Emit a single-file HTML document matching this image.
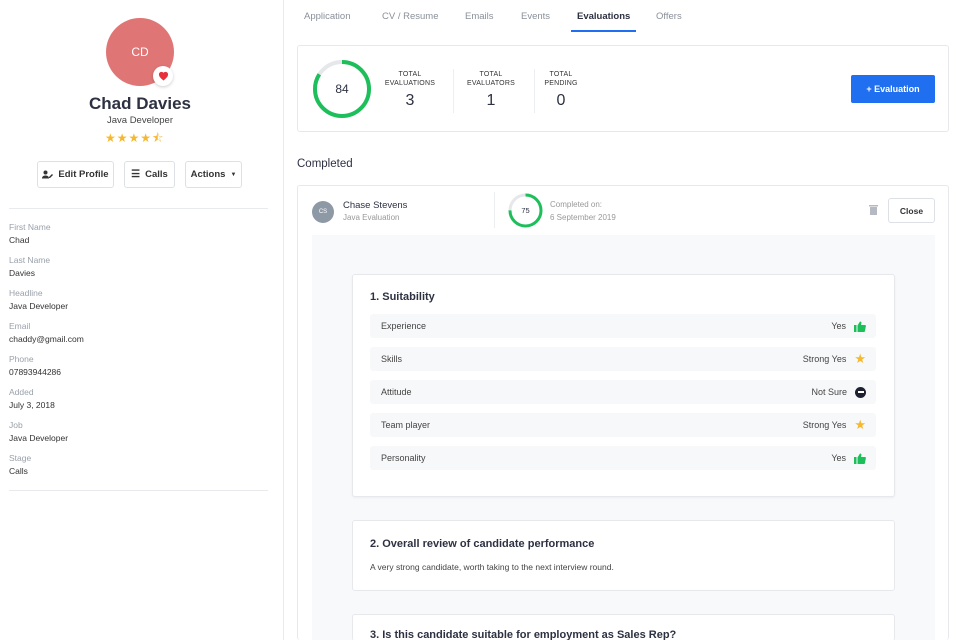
<!DOCTYPE html>
<html style="height:640px;overflow:hidden"><head><meta charset="utf-8"><style>
*{box-sizing:border-box;margin:0;padding:0}
body{width:960px;height:640px;overflow:hidden;background:#fff;font-family:"Liberation Sans",sans-serif;color:#2d3142;position:relative}
.a{position:absolute}
.side{left:0;top:0;width:284px;height:640px;border-right:1px solid #e8eaee}
.btn{position:absolute;height:27px;border:1px solid #dde0e5;border-radius:3px;font-size:9.5px;font-weight:bold;color:#333;display:flex;align-items:center;justify-content:center;gap:5px;background:#fff}
.lbl{position:absolute;left:9px;font-size:8.5px;color:#9aa0ab}
.val{position:absolute;left:9px;font-size:8.5px;color:#333}
.tab{position:absolute;top:11px;font-size:9.5px;color:#8a909a}
.card{position:absolute;background:#fff;border:1px solid #e6e8ec;border-radius:3px}
.sl{position:absolute;font-size:7px;color:#333;text-align:center;line-height:9px;letter-spacing:.2px}
.sn{position:absolute;font-size:16px;color:#2d3142;text-align:center}
.row{position:absolute;left:17px;width:506px;height:24px;background:#f7f8fa;border-radius:3px;font-size:9px;color:#444;display:flex;align-items:center;padding:0 10px 0 11px}
.row .r{margin-left:auto;display:flex;align-items:center;gap:8px}
</style></head><body>
<div class="a side">
  <div class="a" style="left:106px;top:18px;width:68px;height:68px;border-radius:50%;background:#e07575;color:#fff;font-size:12px;display:flex;align-items:center;justify-content:center">CD</div>
  <div class="a" style="left:153px;top:66px;width:20px;height:20px;border-radius:50%;background:#fff;box-shadow:0 1px 3px rgba(0,0,0,.2);display:flex;align-items:center;justify-content:center">
    <svg width="11" height="10" viewBox="0 0 24 22"><path d="M12 21l-1.5-1.3C5 15 2 12 2 7.5 2 4.4 4.4 2 7.5 2c1.7 0 3.4.8 4.5 2.1C13.1 2.8 14.8 2 16.5 2 19.6 2 22 4.4 22 7.5c0 4.5-3 7.5-8.5 12.2z" fill="#e8303a"/></svg>
  </div>
  <div class="a" style="left:0;width:280px;top:94px;text-align:center;font-size:17px;font-weight:bold;color:#2d3142">Chad Davies</div>
  <div class="a" style="left:0;width:280px;top:115px;text-align:center;font-size:9.5px;color:#444">Java Developer</div>
  <div class="a" style="left:105px;top:129px;font-size:12px;color:#f5b82e;letter-spacing:1px">★★★★⯪</div>
  <div class="btn" style="left:37px;top:161px;width:77px"><svg width="11" height="9" viewBox="0 0 22 18"><circle cx="7" cy="5" r="4" fill="#333"/><path d="M0 17c0-4 3-6 7-6s7 2 7 6z" fill="#333"/><path d="M14 14l6-6 2 2-6 6h-2z" fill="#333"/></svg>Edit Profile</div>
  <div class="btn" style="left:124px;top:161px;width:51px"><span style="font-size:10px">☰</span>Calls</div>
  <div class="btn" style="left:185px;top:161px;width:57px">Actions <span style="font-size:6px">▼</span></div>
  <div class="a" style="left:9px;top:208px;width:259px;height:1px;background:#e8eaee"></div>
  <div class="lbl" style="top:222px">First Name</div><div class="val" style="top:235px">Chad</div>
  <div class="lbl" style="top:255px">Last Name</div><div class="val" style="top:268px">Davies</div>
  <div class="lbl" style="top:288px">Headline</div><div class="val" style="top:301px">Java Developer</div>
  <div class="lbl" style="top:321px">Email</div><div class="val" style="top:334px">chaddy@gmail.com</div>
  <div class="lbl" style="top:354px">Phone</div><div class="val" style="top:367px">07893944286</div>
  <div class="lbl" style="top:387px">Added</div><div class="val" style="top:400px">July 3, 2018</div>
  <div class="lbl" style="top:420px">Job</div><div class="val" style="top:433px">Java Developer</div>
  <div class="lbl" style="top:453px">Stage</div><div class="val" style="top:466px">Calls</div>
  <div class="a" style="left:9px;top:490px;width:259px;height:1px;background:#e8eaee"></div>
</div>

<div class="tab" style="left:304px">Application</div>
<div class="tab" style="left:382px">CV / Resume</div>
<div class="tab" style="left:465px">Emails</div>
<div class="tab" style="left:521px">Events</div>
<div class="tab" style="left:577px;color:#2d3142;font-weight:bold">Evaluations</div>
<div class="tab" style="left:656px">Offers</div>
<div class="a" style="left:571px;top:30px;width:65px;height:2px;background:#1f6ff0"></div>

<div class="card" style="left:297px;top:45px;width:652px;height:87px">
  <svg class="a" style="left:14px;top:13px" width="60" height="60" viewBox="0 0 60 60"><circle cx="30" cy="30" r="27" fill="none" stroke="#e5e7eb" stroke-width="4"/><circle cx="30" cy="30" r="27" fill="none" stroke="#1dbf5a" stroke-width="4" stroke-dasharray="142.5 170" transform="rotate(-90 30 30)"/></svg>
  <div class="a" style="left:14px;top:36px;width:60px;text-align:center;font-size:12px">84</div>
  <div class="sl" style="left:82px;top:24px;width:60px">TOTAL<br>EVALUATIONS</div><div class="sn" style="left:82px;top:46px;width:60px">3</div>
  <div class="a" style="left:155px;top:23px;width:1px;height:44px;background:#eceef1"></div>
  <div class="sl" style="left:163px;top:24px;width:60px">TOTAL<br>EVALUATORS</div><div class="sn" style="left:163px;top:46px;width:60px">1</div>
  <div class="a" style="left:236px;top:23px;width:1px;height:44px;background:#eceef1"></div>
  <div class="sl" style="left:243px;top:24px;width:40px">TOTAL<br>PENDING</div><div class="sn" style="left:243px;top:46px;width:40px">0</div>
  <div class="a" style="left:553px;top:29px;width:84px;height:28px;background:#1f6ff0;border-radius:2px;color:#fff;font-size:9px;font-weight:bold;display:flex;align-items:center;justify-content:center">+ Evaluation</div>
</div>

<div class="a" style="left:297px;top:158px;font-size:11.5px;color:#2d3142">Completed</div>

<div class="card" style="left:297px;top:185px;width:652px;height:455px;overflow:hidden;border-bottom:none">
  <div class="a" style="left:14px;top:15px;width:22px;height:22px;border-radius:50%;background:#8e99a6;color:#fff;font-size:6px;display:flex;align-items:center;justify-content:center">CS</div>
  <div class="a" style="left:45px;top:14px;font-size:9.5px;color:#2d3142">Chase Stevens</div>
  <div class="a" style="left:45px;top:27px;font-size:8px;color:#999">Java Evaluation</div>
  <div class="a" style="left:196px;top:6px;width:1px;height:36px;background:#eceef1"></div>
  <svg class="a" style="left:210px;top:7px" width="35" height="35" viewBox="0 0 35 35"><circle cx="17.5" cy="17.5" r="15.5" fill="none" stroke="#e5e7eb" stroke-width="3"/><circle cx="17.5" cy="17.5" r="15.5" fill="none" stroke="#1dbf5a" stroke-width="3" stroke-dasharray="73 98" transform="rotate(-90 17.5 17.5)"/></svg>
  <div class="a" style="left:210px;top:20px;width:35px;text-align:center;font-size:7.5px">75</div>
  <div class="a" style="left:252px;top:14px;font-size:8px;color:#999">Completed on:</div>
  <div class="a" style="left:252px;top:27px;font-size:8px;color:#999">6 September 2019</div>
  <svg class="a" style="left:571px;top:18px" width="9" height="11" viewBox="0 0 9 11"><rect x="0" y="1" width="9" height="1.5" fill="#b5bac2"/><rect x="1" y="3" width="7" height="8" fill="#b5bac2"/></svg>
  <div class="btn" style="left:590px;top:12px;width:47px;height:25px;font-size:8.5px">Close</div>
  <div class="a" style="left:14px;top:49px;width:623px;height:406px;background:#f8f9fa;overflow:hidden">
    <div class="card" style="left:40px;top:39px;width:543px;height:223px;box-shadow:0 1px 2px rgba(0,0,0,.05)">
      <div class="a" style="left:17px;top:16px;font-size:11px;font-weight:bold;color:#2d3142">1. Suitability</div>
      <div class="row" style="top:39px">Experience<span class="r">Yes <svg width="12" height="11" viewBox="0 0 12 11"><rect x="0" y="4" width="2.5" height="7" fill="#1dbf5a"/><path d="M3.5 4.5L6 0.5c1 0 1.6.6 1.4 1.6L7 4h4c.6 0 1 .5.9 1.1l-1 5c-.1.5-.5.9-1 .9H3.5z" fill="#1dbf5a"/></svg></span></div>
      <div class="row" style="top:72px">Skills<span class="r">Strong Yes <span style="color:#f5b82e;font-size:13px">★</span></span></div>
      <div class="row" style="top:105px">Attitude<span class="r">Not Sure <span style="display:inline-block;width:11px;height:11px;border-radius:50%;background:#1e2230;position:relative"><span style="position:absolute;left:2.5px;top:4.5px;width:6px;height:2px;background:#fff"></span></span></span></div>
      <div class="row" style="top:138px">Team player<span class="r">Strong Yes <span style="color:#f5b82e;font-size:13px">★</span></span></div>
      <div class="row" style="top:171px">Personality<span class="r">Yes <svg width="12" height="11" viewBox="0 0 12 11"><rect x="0" y="4" width="2.5" height="7" fill="#1dbf5a"/><path d="M3.5 4.5L6 0.5c1 0 1.6.6 1.4 1.6L7 4h4c.6 0 1 .5.9 1.1l-1 5c-.1.5-.5.9-1 .9H3.5z" fill="#1dbf5a"/></svg></span></div>
    </div>
    <div class="card" style="left:40px;top:285px;width:543px;height:71px">
      <div class="a" style="left:17px;top:17px;font-size:11px;font-weight:bold;color:#2d3142">2. Overall review of candidate performance</div>
      <div class="a" style="left:17px;top:41px;font-size:8.5px;color:#444">A very strong candidate, worth taking to the next interview round.</div>
    </div>
    <div class="card" style="left:40px;top:379px;width:543px;height:27px;border-bottom:none;overflow:hidden">
      <div class="a" style="left:17px;top:14px;font-size:11px;font-weight:bold;color:#2d3142;white-space:nowrap">3. Is this candidate suitable for employment as Sales Rep?</div>
    </div>
  </div>
</div>
</body></html>
